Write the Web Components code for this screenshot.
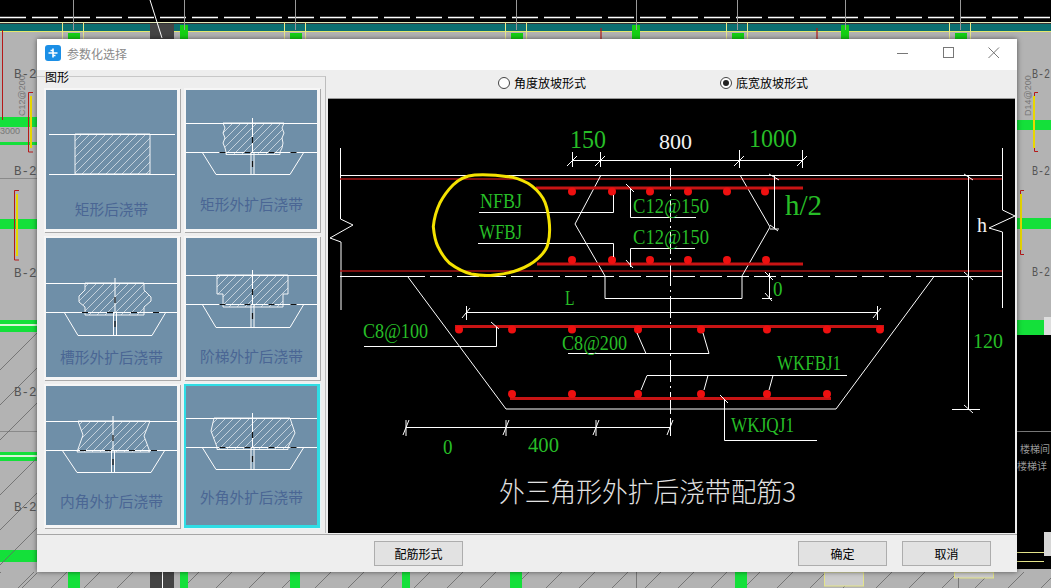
<!DOCTYPE html>
<html lang="zh">
<head>
<meta charset="utf-8">
<title>参数化选择</title>
<style>
    html, body { margin: 0; padding: 0; background: #b3b3b3; overflow: hidden; }
    body { width: 1051px; height: 588px; position: relative; font-family: "Noto Sans CJK SC", "Liberation Sans", sans-serif; }
</style>
</head>
<body>
<cad-backdrop></cad-backdrop>
<param-dialog>
    <span slot="title">参数化选择</span>
    <shape-picker slot="left">
        <shape-card shape="rect" label-y="119">矩形后浇带</shape-card>
        <shape-card shape="rectExt" label-y="114">矩形外扩后浇带</shape-card>
        <shape-card shape="groove" label-y="119">槽形外扩后浇带</shape-card>
        <shape-card shape="step" label-y="118">阶梯外扩后浇带</shape-card>
        <shape-card shape="inner" label-y="115">内角外扩后浇带</shape-card>
        <shape-card shape="outer" label-y="111" selected>外角外扩后浇带</shape-card>
    </shape-picker>
    <radio-option slot="options">角度放坡形式</radio-option>
    <radio-option slot="options" checked>底宽放坡形式</radio-option>
    <cad-drawing slot="canvas"></cad-drawing>
    <dlg-button slot="extra">配筋形式</dlg-button>
    <dlg-button slot="actions">确定</dlg-button>
    <dlg-button slot="actions">取消</dlg-button>
</param-dialog>

<script>
class CadBackdrop extends HTMLElement {
    constructor() {
        super();
        this.attachShadow({mode: 'open'});
        let s = '';
        // black strip and the beam band along the top
        s += '<rect width="1051" height="22" fill="#000"/>';
        s += '<line x1="0" x2="1051" y1="17.5" y2="17.5" stroke="#fff" stroke-width="1.4" stroke-dasharray="26 6"/>';
        s += '<rect y="22" width="1051" height="1" fill="#e4e8b8"/>';
        s += '<rect y="23" width="1051" height="1" fill="#333"/>';
        s += '<rect y="24" width="1051" height="7" fill="#0b6f70"/>';
        s += '<rect y="31" width="1051" height="1" fill="#e4e86c"/>';
        // columns
        for (const x of [73, 295, 516, 737, 960]) {
            s += `<rect x="${x - 5}" y="33" width="12" height="8" fill="#14d014"/>`;
            s += `<line x1="${x - 10.5}" x2="${x - 10.5}" y1="22" y2="40" stroke="#e8e88a"/>`;
            s += `<line x1="${x + 10.5}" x2="${x + 10.5}" y1="22" y2="40" stroke="#e8e88a"/>`;
        }
        for (const x of [184, 636, 845]) {
            s += `<rect x="${x - 4}" y="25" width="8" height="16" fill="#14d014"/>`;
        }
        for (const x of [73, 184, 295, 516, 636, 737, 845, 960]) {
            s += `<line x1="${x + .5}" x2="${x + .5}" y1="0" y2="30" stroke="#999"/>`;
        }
        for (const x of [601, 817]) {
            s += `<line x1="${x}" x2="${x}" y1="28" y2="41" stroke="#b51818" stroke-width="1.2"/>`;
        }
        s += '<rect x="150" y="24" width="24" height="16" fill="#444"/>';
        s += '<line x1="150" y1="0" x2="162" y2="38" stroke="#fff"/>';

        // left strip
        const bands = [[117, 10], [142, 3], [219, 10], [320, 12], [452, 9], [550, 12]];
        for (const [y, h] of bands) {
            s += `<rect x="0" y="${y}" width="37" height="${h}" fill="#14e03a"/>`;
        }
        s += '<line x1="0" x2="37" y1="325" y2="325" stroke="#d8f5d8" stroke-width="2"/>';
        s += '<line x1="0" x2="37" y1="456" y2="456" stroke="#d8f5d8" stroke-width="2"/>';
        s += '<line x1="0" x2="37" y1="178.5" y2="178.5" stroke="#8a8a8a"/>';
        s += '<line x1="0" x2="37" y1="431.5" y2="431.5" stroke="#8a8a8a"/>';
        s += '<line x1="2.5" x2="2.5" y1="30" y2="120" stroke="#b51818"/>';
        s += '<path d="M33 92.5H28.5V152H33M19 190.5H14.5V260H19" fill="none" stroke="#b51818"/>';
        s += '<line x1="31" x2="31" y1="96" y2="148" stroke="#e8d800" stroke-width="2"/>';
        s += '<line x1="17" x2="17" y1="194" y2="256" stroke="#e8d800" stroke-width="2"/>';
        for (const y of [340, 375, 410, 465, 500, 535, 580, 600]) {
            s += `<line x1="0" y1="${y + 30}" x2="37" y2="${y - 7}" stroke="#666" stroke-width=".8"/>`;
        }
        for (const [y, t] of [[78, 'B-20'], [175, 'B-20'], [277, 'B-20'], [396, 'B-25'], [511, 'B-20']]) {
            s += `<text x="14" y="${y}" class="lbl" textLength="30" lengthAdjust="spacingAndGlyphs">${t}</text>`;
        }
        s += '<text x="0" y="134" class="tiny">3000</text>';
        s += '<text class="tiny" transform="translate(25 116) rotate(-90)">C12@200</text>';

        // right strip
        for (const [y, h] of [[120, 10], [218, 11]]) {
            s += `<rect x="1017" y="${y}" width="34" height="${h}" fill="#14e03a"/>`;
        }
        s += '<rect x="1017" y="320" width="27" height="15" fill="#14e03a"/>';
        s += '<rect x="1044" y="317" width="7" height="33" fill="#ddd"/>';
        s += '<rect x="1017" y="335" width="34" height="234" fill="#000"/>';
        s += '<line x1="1017" x2="1051" y1="431.5" y2="431.5" stroke="#777"/>';
        s += '<rect x="1044" y="532" width="7" height="24" fill="#d6d6d6"/>';
        s += '<line x1="1017" x2="1044" y1="552.5" y2="552.5" stroke="#e4e48a"/>';
        s += '<line x1="1017" x2="1044" y1="561.5" y2="561.5" stroke="#e4e48a"/>';
        s += '<path d="M1038 92.5H1034.5V151.5H1038M1024 190.5H1020.5V254.5H1024" fill="none" stroke="#b51818"/>';
        s += '<line x1="1034" x2="1034" y1="96" y2="148" stroke="#e8d800" stroke-width="2"/>';
        s += '<line x1="1021" x2="1021" y1="194" y2="250" stroke="#e8d800" stroke-width="2"/>';
        for (const [y, t] of [[78, 'B-2'], [175, 'B-2'], [276, 'B-2']]) {
            s += `<text x="1032" y="${y}" class="lbl" textLength="18" lengthAdjust="spacingAndGlyphs">${t}</text>`;
        }
        s += '<text class="tiny" transform="translate(1031 116) rotate(-90)">D14@200</text>';
        s += '<text x="1020" y="453" class="cjk">楼梯间</text>';
        s += '<text x="1017" y="470" class="cjk">楼梯详</text>';

        // bottom strip
        for (let x = -15; x < 1050; x += 33) {
            s += `<line x1="${x}" y1="588" x2="${x + 16}" y2="572" stroke="#666" stroke-width=".8"/>`;
        }
        for (const [a, b] of [[68, 80], [180, 188], [290, 300], [402, 410], [510, 522], [735, 747]]) {
            s += `<rect x="${a}" y="572" width="${b - a}" height="16" fill="#14e03a"/>`;
        }
        s += '<rect x="150" y="572" width="24" height="16" fill="#444"/>';
        s += '<line x1="162.5" x2="162.5" y1="572" y2="588" stroke="#fff"/>';
        s += '<rect x="824.5" y="572" width="39" height="14" fill="#ccc" stroke="#e4e48a"/>';
        s += '<rect x="954.5" y="572" width="39" height="6" fill="#ccc" stroke="#e4e48a"/>';
        s += '<line x1="636.5" x2="636.5" y1="572" y2="588" stroke="#777"/>';
        s += '<line x1="958.5" x2="958.5" y1="578" y2="588" stroke="#777"/>';

        this.shadowRoot.innerHTML = `
            <style>
                :host { display: block; position: absolute; left: 0; top: 0; width: 1051px; height: 588px; }
                svg { display: block; }
                .lbl { font: 13px "Liberation Mono", monospace; fill: #555; }
                .tiny { font: 9px "Liberation Sans", sans-serif; fill: #777; }
                .cjk { font: 10px "Noto Sans CJK SC", sans-serif; fill: #999; }
            </style>
            <svg width="1051" height="588" viewBox="0 0 1051 588">${s}</svg>
        `;
    }
}
customElements.define('cad-backdrop', CadBackdrop);

class ParamDialog extends HTMLElement {
    constructor() {
        super();
        this.attachShadow({mode: 'open'});
        this.shadowRoot.innerHTML = `
            <style>
                :host {
                    display: flex;
                    flex-direction: column;
                    position: absolute;
                    left: 37px;
                    top: 39px;
                    width: 980px;
                    height: 533px;
                    background: #eeeeee;
                    box-shadow: 0 0 5px rgba(0, 0, 0, .55);
                    font: 12px "Noto Sans CJK SC", "Liberation Sans", sans-serif;
                    color: #000;
                }
                .title {
                    height: 31px;
                    box-sizing: border-box;
                    flex: none;
                    background: #fff;
                    display: flex;
                    align-items: center;
                    padding: 0 0 3px 8px;
                    gap: 6px;
                    color: #8a8a8a;
                }
                .title svg.logo { flex: none; }
                .spacer { flex: 1; }
                .wins { display: flex; }
                .win { width: 45.5px; height: 28px; display: flex; align-items: center; justify-content: center; }
                .main { flex: 1; display: flex; min-height: 0; }
                .left { width: 291px; flex: none; }
                .right { flex: 1; display: flex; flex-direction: column; min-width: 0; padding-right: 2px; }
                .options {
                    height: 29px;
                    flex: none;
                    display: flex;
                    align-items: center;
                    padding: 0 0 2px 170px;
                    gap: 134px;
                    border-bottom: 1px solid #999;
                    box-sizing: border-box;
                }
                .canvas { flex: 1; min-height: 0; }
                .foot {
                    height: 38px;
                    flex: none;
                    border-top: 1px solid #a6a6a6;
                    box-sizing: border-box;
                    display: flex;
                    align-items: center;
                    padding: 0 26px 0 337px;
                }
                .actions { margin-left: auto; display: flex; gap: 15px; }
            </style>
            <div class="title">
                <svg class="logo" width="16" height="16" viewBox="0 0 16 16">
                    <rect width="16" height="16" rx="3" fill="#1b8fe6"/>
                    <path d="M8 3.5V12.5M3.5 8H12.5M5.5 5.5H8M8 10.5H10.5" stroke="#fff" stroke-width="1.6" fill="none"/>
                </svg>
                <slot name="title"></slot>
                <span class="spacer"></span>
                <span class="wins">
                    <span class="win"><svg width="12" height="12"><line x1="0" x2="11" y1="6.5" y2="6.5" stroke="#777"/></svg></span>
                    <span class="win"><svg width="12" height="12"><rect x=".5" y=".5" width="10" height="10" fill="none" stroke="#777"/></svg></span>
                    <span class="win"><svg width="12" height="12"><path d="M.5 .5L11 11M11 .5L.5 11" stroke="#777" fill="none"/></svg></span>
                </span>
            </div>
            <div class="main">
                <div class="left"><slot name="left"></slot></div>
                <div class="right">
                    <div class="options"><slot name="options"></slot></div>
                    <div class="canvas"><slot name="canvas"></slot></div>
                </div>
            </div>
            <div class="foot">
                <slot name="extra"></slot>
                <div class="actions"><slot name="actions"></slot></div>
            </div>
        `;
    }
}
customElements.define('param-dialog', ParamDialog);

class ShapePicker extends HTMLElement {
    constructor() {
        super();
        this.attachShadow({mode: 'open'});
        this.shadowRoot.innerHTML = `
            <style>
                :host { display: block; position: relative; height: 463px; box-sizing: border-box; padding-top: 6px; }
                .group {
                    width: 289px;
                    height: 457px;
                    box-sizing: border-box;
                    border-top: 1px solid #c8c8c8;
                    border-right: 1px solid #bdbdbd;
                    padding: 11px 0 0 7px;
                }
                .grid { display: grid; grid-template-columns: 136px 136px; grid-auto-rows: 144px; gap: 4px; }
                .legend { position: absolute; left: 8px; top: 0; background: #eee; line-height: 13px; font-size: 12px; }
            </style>
            <div class="group"><div class="grid"><slot></slot></div></div>
            <span class="legend">图形</span>
        `;
    }
}
customElements.define('shape-picker', ShapePicker);

const SHAPES = {
    rect: {y1: 44, y2: 84, plain: true, outline: '29,44 104,44 104,84 29,84'},
    rectExt: {y1: 33, y2: 62, cx: 66.5, trap: [16, 30, 104, 118], bottom: 84,
        outline: '37,33 39,38 37,43 39,48 37,53 39,58 40,62 40,64.5 94,64.5 94,62 96,58 97,53 96,48 98,43 96,38 98,33'},
    groove: {y1: 45, y2: 74, cx: 69, trap: [18, 32, 106, 120], bottom: 97,
        outline: '39,45 39,52 33,58 33,64 39,69 39,77 98,77 98,69 105,63 105,59 98,52 98,45'},
    step: {y1: 37, y2: 66, cx: 66.5, trap: [16, 30, 104, 118], bottom: 89,
        outline: '31,37 31,56 37,56 37,69 97,69 97,56 102,56 102,37'},
    inner: {y1: 35, y2: 64, cx: 67, trap: [16, 31, 105, 119], bottom: 86,
        outline: '32,35 37,49 31,66 104,66 98,50 104,35'},
    outer: {y1: 32, y2: 61, cx: 66.5, trap: [16, 30, 104, 118], bottom: 83,
        outline: '28,32 25,45 31,61 31,63.5 102,63.5 102,61 109,47 104,32'}
};

class ShapeCard extends HTMLElement {
    constructor() {
        super();
        this.attachShadow({mode: 'open'});
    }

    connectedCallback() {
        const d = SHAPES[this.getAttribute('shape')];
        const labelY = this.getAttribute('label-y');
        let art = `<polygon points="${d.outline}" fill="url(#hatch)" stroke="#fff" stroke-width=".9"/>`;
        if (d.plain) {
            art += `<path d="M3 ${d.y1 + .5}H129M3 ${d.y2 + .5}H129" stroke="#fff"/>`;
        } else {
            const [a, b, c, e] = d.trap;
            art += `<path d="M0 ${d.y1 + .5}H131M0 ${d.y2 + .5}H131" stroke="#fff"/>`;
            art += `<path d="M${a} ${d.y2}L${b} ${d.bottom + .5}H${c}L${e} ${d.y2}" stroke="#fff" fill="none"/>`;
            art += `<path d="M${d.cx} ${d.y1 - 5}V${d.y2}M${d.cx - 1.5} ${d.y2}V${d.bottom + 1}M${d.cx + 1.5} ${d.y2}V${d.bottom + 1}" stroke="#fff" fill="none"/>`;
            const black = [[-33, -27], [-8, -2], [16, 22], [38, 44]]
                .map(([p, q]) => `M${d.cx + p} ${d.y2 + .5}H${d.cx + q}`).join('');
            art += `<path d="${black}M${d.cx} ${d.y1 + 14}V${d.y1 + 20}M${d.cx} ${d.y2 + 9}V${d.y2 + 15}" stroke="#111" stroke-width="1.2"/>`;
        }
        this.shadowRoot.innerHTML = `
            <style>
                :host {
                    display: block;
                    position: relative;
                    box-sizing: border-box;
                    background: #6f8fa8;
                    border: 2px solid #f6f6f6;
                    border-right: 3px solid #f6f6f6;
                    border-bottom: 3px solid #f6f6f6;
                    box-shadow: 1px 1px 0 #aaa;
                }
                :host([selected]) {
                    border: 2px solid #2fdde5;
                    border-bottom-width: 3px;
                    border-right-width: 3px;
                    box-shadow: 0 0 0 1px #e4f6f8;
                }
                svg { display: block; }
                .label {
                    position: absolute;
                    left: 0;
                    right: 0;
                    top: ${labelY}px;
                    transform: translateY(-50%);
                    text-align: center;
                    font-size: 14.7px;
                    line-height: 20px;
                    color: #4a6694;
                }
            </style>
            <svg width="131" height="139" viewBox="0 0 131 139">
                <defs>
                    <pattern id="hatch" patternUnits="userSpaceOnUse" width="8" height="8">
                        <path d="M-1 9L9 -1M-1 1L1 -1M7 9L9 7" stroke="#fff" stroke-width=".7" opacity=".85"/>
                    </pattern>
                </defs>
                ${art}
            </svg>
            <span class="label"><slot></slot></span>
        `;
    }
}
customElements.define('shape-card', ShapeCard);

class RadioOption extends HTMLElement {
    constructor() {
        super();
        this.attachShadow({mode: 'open'});
        this.shadowRoot.innerHTML = `
            <style>
                :host { display: inline-flex; align-items: center; gap: 4px; font-size: 12px; line-height: 14px; }
                .dot { width: 12px; height: 12px; flex: none; border: 1px solid #444; border-radius: 50%; box-sizing: border-box; background: #fff; position: relative; }
                :host([checked]) .dot::after {
                    content: '';
                    position: absolute;
                    left: 2px;
                    top: 2px;
                    width: 6px;
                    height: 6px;
                    border-radius: 50%;
                    background: #222;
                }
            </style>
            <span class="dot"></span><slot></slot>
        `;
    }
}
customElements.define('radio-option', RadioOption);

class DlgButton extends HTMLElement {
    constructor() {
        super();
        this.attachShadow({mode: 'open'});
        this.shadowRoot.innerHTML = `
            <style>
                :host {
                    display: flex;
                    align-items: center;
                    justify-content: center;
                    width: 89px;
                    height: 25px;
                    box-sizing: border-box;
                    background: #e2e2e2;
                    border: 1px solid #adadad;
                    font-size: 12px;
                    cursor: default;
                }
            </style>
            <slot></slot>
        `;
    }
}
customElements.define('dlg-button', DlgButton);

class CadDrawing extends HTMLElement {
    constructor() {
        super();
        this.attachShadow({mode: 'open'});
        const dots = (xs, y) => xs.map(x => `<circle cx="${x}" cy="${y}" r="4"/>`).join('');
        const label = (t, x, y, w, size, cls = 'g') =>
            `<text class="${cls}" x="${x}" y="${y}" font-size="${size}" textLength="${w}" lengthAdjust="spacingAndGlyphs">${t}</text>`;
        this.shadowRoot.innerHTML = `
            <style>
                :host { display: block; width: 687px; height: 434px; background: #000; }
                svg { display: block; }
                .w { fill: none; stroke: #fff; stroke-width: 1; }
                .g, .wt { font-family: "Liberation Serif", serif; }
                .g { fill: #27bd27; }
                .wt { fill: #f2f2f2; }
                .cap { font-family: "Noto Sans CJK SC", sans-serif; font-weight: 300; fill: #e2e2e2; }
                .bar { stroke: #c81414; stroke-width: 3; }
                .thin { stroke: #a81414; stroke-width: 1.4; }
                .dots circle { fill: #ee1010; }
            </style>
            <svg width="687" height="434" viewBox="328 99 687 434">
                <!-- slab edges and break marks -->
                <path class="w" d="M340.5 148V219L353 225L330 238L341 242V310"/>
                <path class="w" d="M1002.5 148V210L1015 216L989 228L1002.5 232V308"/>
                <path class="w" d="M340 175.5H1003M340 276.5H425M933 276.5H1003"/>
                <line x1="430" x2="933" y1="276.5" y2="276.5" stroke="#fff" stroke-dasharray="22 5"/>
                <line class="thin" x1="340" x2="1002" y1="179" y2="179"/>
                <line class="thin" x1="340" x2="1002" y1="271" y2="271"/>

                <!-- section outline -->
                <path class="w" d="M601 175L575 224L605 276V298.5H742V276L770 227L740 175"/>
                <path class="w" d="M408 277L506 409H836L934 276.5"/>
                <line x1="670.5" x2="670.5" y1="168" y2="434" stroke="#fff" stroke-dasharray="22 4 2 4"/>

                <!-- bars -->
                <line class="bar" x1="536" x2="803" y1="188" y2="188"/>
                <line class="bar" x1="537" x2="803" y1="264" y2="264"/>
                <line class="bar" x1="455" x2="884" y1="326.5" y2="326.5"/>
                <line class="bar" x1="510" x2="831" y1="398.5" y2="398.5"/>
                <g class="dots">
                    ${dots([572, 612, 650, 688, 727, 765], 191.5)}
                    ${dots([572, 612, 650, 688, 727, 766], 260)}
                    ${dots([459, 512, 572, 638, 701, 767, 827, 880], 329.5)}
                    ${dots([512, 572, 638, 701, 767, 827], 394)}
                </g>

                <!-- leaders -->
                <path class="w" d="M479 212.5H613.5V195M478 243.5H613.5V257"/>
                <path class="w" d="M696 217.5H630.5V189M626 184L634 192M695 248.5H630.5V267M626 260L633 268"/>
                <path class="w" d="M364 346.5H496.5V327M491 322L499 329"/>
                <path class="w" d="M637 333L646 353.5H568M709 353.5H568M709 353.5L703 333"/>
                <path class="w" d="M847 375.5H647L641 390M708 375.5L704 390M773 375.5L769 390"/>
                <path class="w" d="M817 440.5H724.5V399M720 395L728 403"/>

                <!-- dimensions -->
                <path class="w" d="M572.5 160.5H803M572.5 152V167M600.5 152V167M739.5 150V168M802.5 150V168"/>
                <path class="w" d="M567 166L577 156M595 166L605 156M734 166L744 156M797 166L807 156"/>
                <path class="w" d="M774.5 175V229M769 174L779 180M770 229H779M770 225L778 231"/>
                <path class="w" d="M968.5 175V409M952 409.5H980M964 174L973 180M964 272L973 280M964 405L973 413"/>
                <path class="w" d="M769.5 273V298M765 272L773 280M762 298.5H772M765 293L772 301"/>
                <path class="w" d="M466 312.5H877M466.5 306V320M877.5 306V320M462 318L470 308M873 318L881 308"/>
                <path class="w" d="M406 427.5H670M406 420V436M506 420V436M596 420V436M670.5 420V436M403 435L409 420M503 435L509 420M593 435L599 420M667 435L673 420"/>

                <!-- marked-up circle -->
                <path d="M474.7 175C464 176 458 180 453 185C447 191 443 197 439.7 203.3C436 211 434 219 433.3 226.7C434 234 435 241 438 246.7C441 253 445 259 449.7 263.3C456 268 463 272 471.3 274C479 275.5 487 276 494.7 275C503 274 511 273 518 270C526 267 533 263 538 258.3C543 254 547 249 548 243.3C550 236 550 228 549 220C548 212 547 205 543 198.3C539 192 534 187 528 183.3C522 180 515 177 508 176.7C497 175 486 174.5 474.7 175Z" fill="none" stroke="#f4e200" stroke-width="3"/>

                <!-- texts -->
                ${label('150', 570, 148, 36, 26)}
                ${label('800', 659, 149, 33, 22, 'wt')}
                ${label('1000', 749, 147, 48, 26)}
                ${label('h/2', 785, 215, 37, 30)}
                ${label('h', 977, 232, 10, 21, 'wt')}
                ${label('NFBJ', 480, 208, 42, 20)}
                ${label('WFBJ', 479, 239, 43, 20)}
                ${label('C12@150', 633, 213, 76, 21)}
                ${label('C12@150', 633, 243.5, 76, 21)}
                ${label('0', 773, 296, 9.5, 21)}
                ${label('L', 565, 305, 9.5, 21)}
                ${label('C8@100', 363, 338, 65, 21)}
                ${label('C8@200', 562, 350, 65, 21)}
                ${label('120', 973, 348, 30, 21)}
                ${label('WKFBJ1', 777, 370, 64, 21)}
                ${label('WKJQJ1', 731, 432, 63, 21)}
                ${label('0', 443, 454, 9.5, 20)}
                ${label('400', 528, 452, 31, 20)}
                <text class="cap" x="499" y="502" font-size="27" textLength="297" lengthAdjust="spacingAndGlyphs">外三角形外扩后浇带配筋3</text>
            </svg>
        `;
    }
}
customElements.define('cad-drawing', CadDrawing);
</script>
</body>
</html>
